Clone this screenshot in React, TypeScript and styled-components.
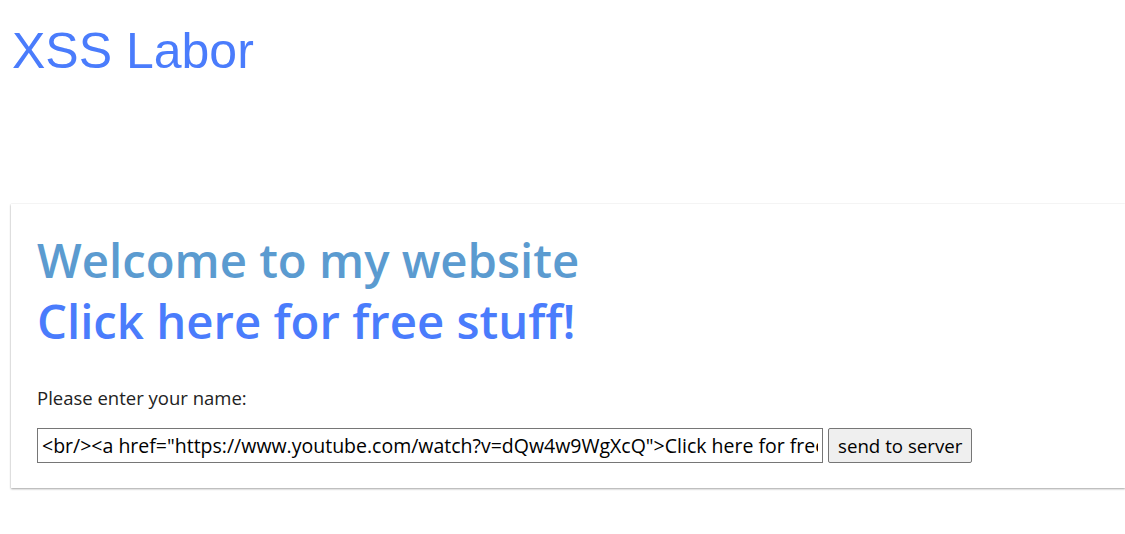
import React from "react";
import styled, { createGlobalStyle } from "styled-components";

const Global = createGlobalStyle`
  html, body { margin: 0; padding: 0; background: #fff; overflow: hidden; }
  body { width: 1125px; height: 534px; }
`;

const Page = styled.div`
  display: flex;
  flex-direction: column;
  padding-top: 22px;
`;

const SiteTitle = styled.h1`
  margin: 0 0 0 12px;
  font-family: "Liberation Sans", Arial, sans-serif;
  font-weight: 400;
  font-size: 50px;
  line-height: 58px;
  color: #4a7cfc;
`;

const Card = styled.section`
  margin: 124px 0 0 11px;
  padding: 25px 26px 25px 26px;
  background: #fff;
  box-shadow: 0 1px 2px rgba(0, 0, 0, 0.35), 0 0 1px rgba(0, 0, 0, 0.12);
  font-family: "Open Sans", "Noto Sans", sans-serif;
  display: flex;
  flex-direction: column;
`;

const Heading = styled.h2<{ $tone: "soft" | "bright" }>`
  margin: 0;
  font-size: 47.3px;
  font-weight: 600;
  line-height: 61px;
  color: ${(p) => (p.$tone === "soft" ? "#5b9bd0" : "#4a7cfc")};
`;

const Label = styled.label`
  margin-top: 35px;
  font-size: 18.5px;
  line-height: 24px;
  color: #222;
`;

const Row = styled.div`
  display: flex;
  align-items: stretch;
  gap: 5px;
  margin-top: 18px;
`;

const Input = styled.input`
  box-sizing: border-box;
  width: 786px;
  height: 35px;
  padding: 0 4px;
  border: 1px solid #767676;
  border-radius: 0;
  font-family: "Open Sans", "Noto Sans", sans-serif;
  font-size: 19.5px;
  color: #000;
  background: #fff;
  outline: none;
`;

const Button = styled.button`
  box-sizing: border-box;
  height: 35px;
  padding: 0 9px;
  border: 1px solid #767676;
  border-radius: 2px;
  background: #efefef;
  font-family: "Open Sans", "Noto Sans", sans-serif;
  font-size: 18.7px;
  color: #000;
`;

export default function App() {
  return (
    <>
      <Global />
      <Page>
        <SiteTitle>XSS Labor</SiteTitle>
        <Card>
          <Heading $tone="soft">Welcome to my website</Heading>
          <Heading $tone="bright">Click here for free stuff!</Heading>
          <Label htmlFor="name">Please enter your name:</Label>
          <Row>
            <Input
              id="name"
              defaultValue={'<br/><a href="https://www.youtube.com/watch?v=dQw4w9WgXcQ">Click here for free stuff!</a>'}
            />
            <Button>send to server</Button>
          </Row>
        </Card>
      </Page>
    </>
  );
}
